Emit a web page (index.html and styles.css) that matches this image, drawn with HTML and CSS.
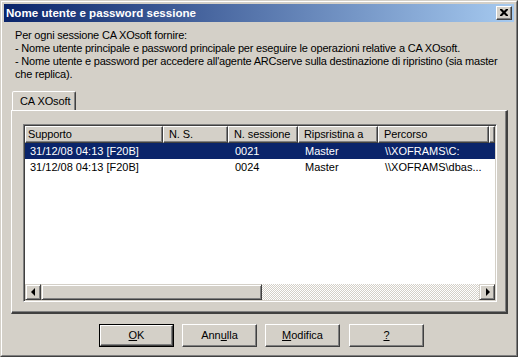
FILE: index.html
```html
<!DOCTYPE html>
<html>
<head>
<meta charset="utf-8">
<link rel="stylesheet" href="styles.css">
</head>
<body>
<div class="window">
  <div class="frame">
    <div class="titlebar">
      <span class="title">Nome utente e password sessione</span>
      <span class="close"><svg width="8" height="7" viewBox="0 0 8 7"><path d="M0 0h2l2 2 2-2h2v1l-2.5 2.5L8 6v1H6L4 5 2 7H0V6l2.5-2.5L0 1z" fill="#000"/></svg></span>
    </div>
    <div class="intro">Per ogni sessione CA XOsoft fornire:<br>- Nome utente principale e password principale per eseguire le operazioni relative a CA XOsoft.<br>- Nome utente e password per accedere all'agente ARCserve sulla destinazione di ripristino (sia master<br>che replica).</div>
    <div class="tabs">
      <div class="tabstrip"><div class="tab">CA XOsoft</div></div>
      <div class="panel">
        <div class="listview">
          <div class="header">
            <div class="hcell c1">Supporto</div>
            <div class="hcell c2">N. S.</div>
            <div class="hcell c3">N. sessione</div>
            <div class="hcell c4">Ripsristina a</div>
            <div class="hcell c5">Percorso</div>
            <div class="hcell c6"></div>
          </div>
          <div class="rows">
            <div class="row selected">
              <div class="cell c1">31/12/08 04:13 [F20B]</div>
              <div class="cell c2"></div>
              <div class="cell c3">0021</div>
              <div class="cell c4">Master</div>
              <div class="cell c5">\\XOFRAMS\C:</div>
            </div>
            <div class="row">
              <div class="cell c1">31/12/08 04:13 [F20B]</div>
              <div class="cell c2"></div>
              <div class="cell c3">0024</div>
              <div class="cell c4">Master</div>
              <div class="cell c5">\\XOFRAMS\dbas...</div>
            </div>
          </div>
          <div class="hscroll">
            <div class="sbtn"><span class="arrow-left"></span></div>
            <div class="thumb"></div>
            <div class="track"></div>
            <div class="sbtn"><span class="arrow-right"></span></div>
          </div>
        </div>
      </div>
    </div>
    <div class="buttons">
      <div class="btn default"><span class="inner"><u>O</u>K</span></div>
      <div class="btn"><span class="inner">Ann<u>u</u>lla</span></div>
      <div class="btn"><span class="inner"><u>M</u>odifica</span></div>
      <div class="btn help"><span class="inner"><u>?</u></span></div>
    </div>
  </div>
</div>
</body>
</html>
```
FILE: styles.css
```css
* { box-sizing: border-box; margin: 0; padding: 0; }
html, body { width: 518px; height: 357px; overflow: hidden; background: #d4d0c8; }
body { font-family: "Liberation Sans", Arial, sans-serif; font-size: 11px; color: #000; }

.window {
  width: 518px; height: 357px; background: #d4d0c8;
  border: 1px solid; border-color: #d4d0c8 #404040 #404040 #d4d0c8;
  display: flex;
}
.frame {
  flex: 1; border: 1px solid; border-color: #fff #808080 #808080 #fff;
  padding: 2px; display: flex; flex-direction: column;
}
.titlebar {
  height: 18px; flex: none;
  background: linear-gradient(to right, #0a246a, #a6caf0);
  display: flex; align-items: center; justify-content: space-between;
  padding: 0 2px 0 2px;
}
.title { color: #fff; font-weight: bold; font-size: 11.6px; line-height: 18px; white-space: nowrap; padding-left: 0; }
.close {
  width: 16px; height: 14px; background: #d4d0c8;
  border: 1px solid; border-color: #fff #404040 #404040 #fff;
  box-shadow: inset -1px -1px 0 #808080;
  display: flex; align-items: center; justify-content: center; padding: 0 1px 1px 0;
}
.close svg { display: block; }

.intro { margin: 7px 0 0 11px; line-height: 13px; white-space: nowrap; letter-spacing: -0.2px; }

.tabs { margin: 10px 6px 0 7px; display: flex; flex-direction: column; }
.tabstrip { display: flex; height: 19px; padding-left: 1px; }
.tab {
  position: relative; z-index: 1; width: 64px; height: 19px;
  background: #d4d0c8; border: 1px solid; border-bottom: none;
  border-color: #fff #404040 transparent #fff;
  box-shadow: inset -1px 0 0 #808080;
  border-radius: 2px 2px 0 0;
  padding: 3px 0 0 7px; line-height: 13px; white-space: nowrap;
  margin-bottom: -1px; letter-spacing: -0.1px;
}
.panel {
  height: 204px;
  border-style: solid; border-width: 1px 2px 2px 1px;
  border-color: #fff #404040 #404040 #fff;
  box-shadow: inset -1px -1px 0 #808080;
  padding: 13px 9px 10px 11px;
}
.listview {
  height: 178px; background: #fff;
  border: 1px solid; border-color: #808080 #fff #fff #808080;
  box-shadow: inset 1px 1px 0 #404040, inset -1px -1px 0 #d4d0c8;
  padding: 1px; display: flex; flex-direction: column;
}
.header { display: flex; height: 17px; flex: none; }
.hcell {
  height: 17px; background: #d4d0c8; border: 1px solid;
  border-color: #fff #404040 #404040 #fff;
  box-shadow: inset -1px -1px 0 #808080;
  line-height: 14px; padding-left: 5px; white-space: nowrap; overflow: hidden;
  letter-spacing: -0.1px;
}
.hcell.c1 { padding-left: 2px; }
.c1 { width: 138px; }
.c2 { width: 65px; }
.c3 { width: 70px; }
.c4 { width: 80px; }
.c5 { width: 111px; }
.c6 { width: 6px; padding: 0; }

.rows { flex: 1; }
.row { display: flex; height: 16px; line-height: 17px; }
.row.selected { background: #0a246a; color: #fff; }
.cell { padding-left: 7px; white-space: nowrap; overflow: hidden; }
.cell.c1 { padding-left: 5px; }

.hscroll { display: flex; height: 16px; flex: none; }
.sbtn {
  width: 16px; height: 16px; background: #d4d0c8;
  border: 1px solid; border-color: #d4d0c8 #404040 #404040 #d4d0c8;
  box-shadow: inset 1px 1px 0 #fff, inset -1px -1px 0 #808080;
  display: flex; align-items: center; justify-content: center;
}
.arrow-left { width: 0; height: 0; border-top: 4px solid transparent; border-bottom: 4px solid transparent; border-right: 4px solid #000; margin-right: 1px; }
.arrow-right { width: 0; height: 0; border-top: 4px solid transparent; border-bottom: 4px solid transparent; border-left: 4px solid #000; margin-left: 1px; }
.thumb {
  width: 221px; height: 16px; background: #d4d0c8;
  border: 1px solid; border-color: #d4d0c8 #404040 #404040 #d4d0c8;
  box-shadow: inset 1px 1px 0 #fff, inset -1px -1px 0 #808080;
}
.track {
  flex: 1;
  background: repeating-conic-gradient(#d4d0c8 0 25%, #fff 0 50%) 0 0 / 2px 2px;
}

.buttons { display: flex; gap: 8px; margin: 10px 0 0 95px; }
.btn {
  width: 75px; height: 23px; background: #d4d0c8;
  border: 1px solid; border-color: #fff #404040 #404040 #fff;
  box-shadow: inset -1px -1px 0 #808080;
  display: flex;
}
.btn .inner { flex: 1; display: flex; align-items: center; justify-content: center; padding-bottom: 1px; }
.btn.default { border: 1px solid #000; box-shadow: none; }
.btn.default .inner {
  border: 1px solid; border-color: #fff #404040 #404040 #fff;
  box-shadow: inset -1px -1px 0 #808080;
}
.btn.help { margin-left: 1px; }
u { text-decoration: underline; text-underline-offset: 1px; }
```
